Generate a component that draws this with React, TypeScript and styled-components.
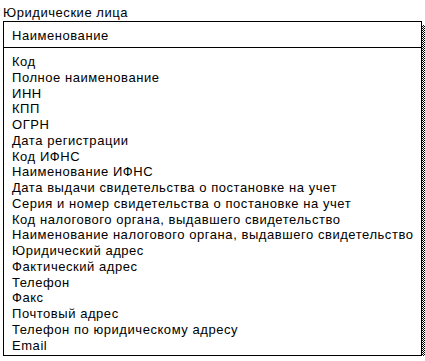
import React from 'react'
import styled, { createGlobalStyle } from 'styled-components'

const GlobalStyle = createGlobalStyle`
  html, body {
    margin: 0;
    padding: 0;
    background: #ffffff;
  }
  body {
    font-family: 'Liberation Sans', Arial, sans-serif;
    font-size: 13px;
    letter-spacing: 0.55px;
    color: #000000;
    -webkit-font-smoothing: none;
  }
`

const Page = styled.div`
  display: flex;
  flex-direction: column;
  padding: 5px 0 0 3px;
  width: 425px;
  box-sizing: border-box;
`

const Title = styled.div`
  line-height: 15.75px;
  height: 16px;
`

const Frame = styled.div`
  position: relative;
  width: 419px;

  &::before {
    content: '';
    position: absolute;
    top: 4px;
    left: 5px;
    right: -4px;
    bottom: -5px;
    background: repeating-conic-gradient(#000000 0 25%, #ffffff 0 50%) 0 0 /
      2px 2px;
  }
`

const Box = styled.div`
  position: relative;
  display: flex;
  flex-direction: column;
  background: #ffffff;
  border: 1px solid #000000;
`

const Header = styled.div`
  height: 26px;
  box-sizing: border-box;
  padding: 6px 0 0 8px;
  line-height: 15.75px;
  border-bottom: 1px solid #000000;
`

const List = styled.ul`
  list-style: none;
  margin: 0;
  padding: 6px 0 2px 8px;
`

const Item = styled.li`
  line-height: 15.75px;
  white-space: nowrap;
`

const fields = [
  'Код',
  'Полное наименование',
  'ИНН',
  'КПП',
  'ОГРН',
  'Дата регистрации',
  'Код ИФНС',
  'Наименование ИФНС',
  'Дата выдачи свидетельства о постановке на учет',
  'Серия и номер свидетельства о постановке на учет',
  'Код налогового органа, выдавшего свидетельство',
  'Наименование налогового органа, выдавшего свидетельство',
  'Юридический адрес',
  'Фактический адрес',
  'Телефон',
  'Факс',
  'Почтовый адрес',
  'Телефон по юридическому адресу',
  'Email',
]

const App = () => (
  <>
    <GlobalStyle />
    <Page>
      <Title>Юридические лица</Title>
      <Frame>
        <Box>
          <Header>Наименование</Header>
          <List>
            {fields.map((f) => (
              <Item key={f}>{f}</Item>
            ))}
          </List>
        </Box>
      </Frame>
    </Page>
  </>
)

export default App
